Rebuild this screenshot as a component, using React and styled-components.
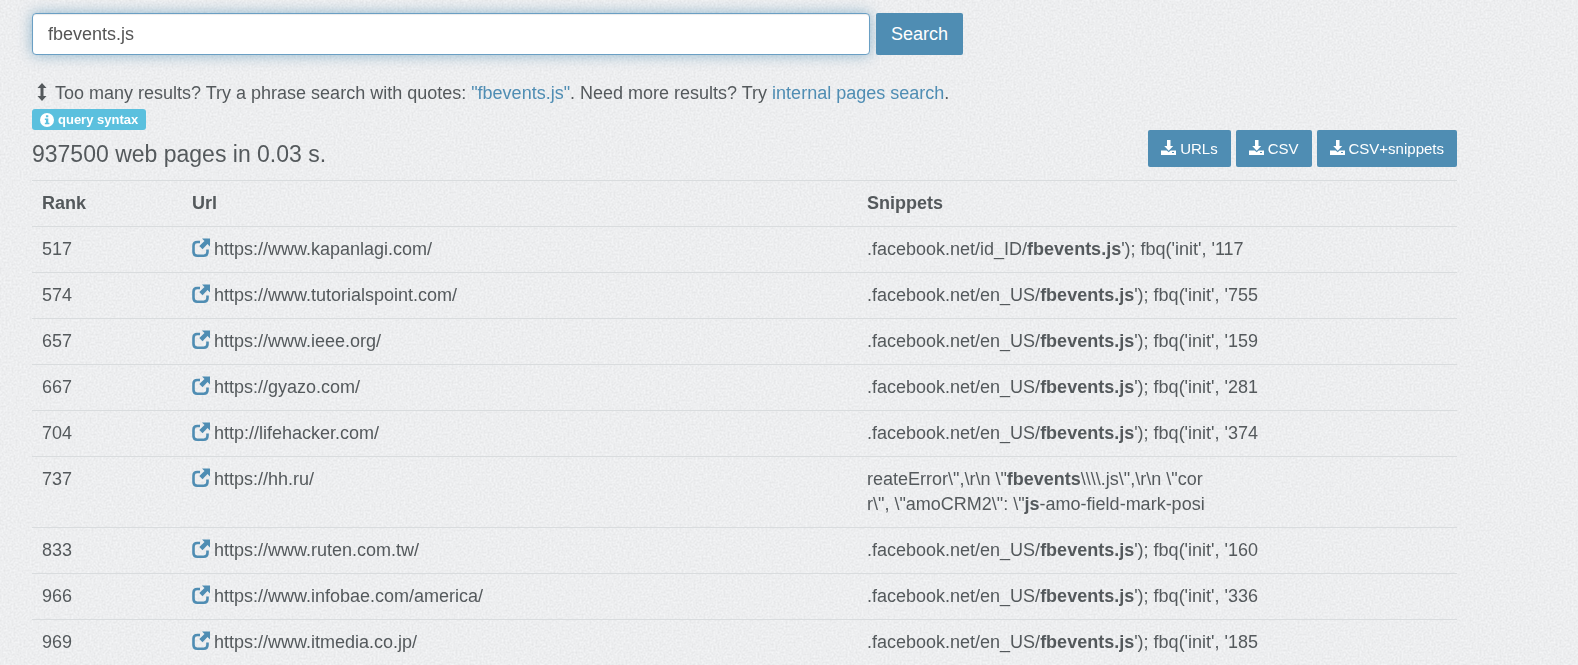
import React, { useState } from "react";
import styled, { createGlobalStyle } from "styled-components";

const GlobalStyle = createGlobalStyle`
  *, *::before, *::after { box-sizing: border-box; }
  html { background: #ecedef; }
  body {
    margin: 0;
    color: #54595c;
    font: 18px/25px "Liberation Sans", Arial, Helvetica, sans-serif;
  }
  a { color: #4f8db3; text-decoration: none; }
  a:hover { text-decoration: underline; }
`;

const Paper = styled.svg`
  position: fixed;
  inset: 0;
  z-index: -1;
  width: 100%;
  height: 100%;
`;

const Page = styled.main`
  padding: 13px 121px 0 32px;
`;

const SearchForm = styled.form`
  display: flex;
  gap: 6px;
  max-width: 931px;
`;

const SearchInput = styled.input`
  flex: 1;
  min-width: 0;
  height: 42px;
  padding: 0 15px;
  border: 1px solid #6a9fc4;
  border-radius: 4px;
  background: #fff;
  color: #555;
  font: inherit;
  outline: none;
  box-shadow: inset 0 1px 1px rgba(0, 0, 0, 0.08), 0 0 14px rgba(79, 141, 179, 0.6);
`;

const Button = styled.button`
  display: inline-flex;
  align-items: center;
  justify-content: center;
  gap: 4px;
  height: ${(p) => (p.$large ? 42 : 37)}px;
  padding: 0 ${(p) => (p.$large ? 15 : 13)}px;
  border: 0;
  border-radius: 2px;
  background: #4f8db3;
  color: #fff;
  font: inherit;
  font-size: ${(p) => (p.$large ? 18 : 15)}px;
  cursor: pointer;
`;

const Tip = styled.p`
  display: flex;
  align-items: center;
  gap: 8px;
  margin: 26px 0 0;
  padding-left: 5px;
`;

const SyntaxLink = styled.a`
  display: flex;
  align-items: center;
  gap: 4px;
  width: max-content;
  height: 21px;
  margin-top: 3px;
  padding: 0 8px;
  border-radius: 3px;
  background: #5bc0de;
  && { color: #fff; }
  font-size: 13px;
  font-weight: bold;
`;

const Summary = styled.div`
  display: flex;
  align-items: flex-start;
  justify-content: space-between;
  height: 50px;
`;

const Count = styled.h1`
  margin: 10px 0 0;
  font-size: 23px;
  font-weight: normal;
  line-height: 28px;
`;

const Downloads = styled.div`
  display: flex;
  gap: 5px;
`;

const Results = styled.table`
  width: 100%;
  table-layout: fixed;
  border-collapse: separate;
  border-spacing: 0;
`;

const Column = styled.col`
  width: ${(p) => p.$share};
`;

const Cell = styled.td`
  padding: 10px;
  border-top: 1px solid #d9dcde;
  text-align: left;
  vertical-align: top;
`;

const Site = styled.div`
  display: flex;
  gap: 4px;
`;

const OpenLink = styled.a`
  display: flex;
  height: 22px;
  align-items: center;
`;

const UpDownIcon = () => (
  <svg width="10" height="22" viewBox="0 0 10 22" fill="currentColor" aria-hidden="true">
    <path d="M5 0 9.500 5H6.500v8h3L5 18 .5 13h3V5h-3z" />
  </svg>
);

const InfoIcon = () => (
  <svg width="14" height="14" viewBox="0 0 13 13" aria-hidden="true">
    <circle cx="6.500" cy="6.500" r="6.500" fill="#fff" />
    <path d="M5.500 2.200h2.200v1.800H5.500zM4.500 5h3.200v4h1v1.400H4.500V9h1V6.400h-1z" fill="#5bc0de" />
  </svg>
);

const DownloadIcon = () => (
  <svg width="15" height="17" viewBox="0 0 15 17" fill="currentColor" aria-hidden="true">
    <path d="M6 0h3.500v6h2.700L7.700 10.800 3.200 6H6z" />
    <path d="M0 10.500h5.700l2 1.700 2-1.700H15V15H0zM11 12v1h2v-1z" fillRule="evenodd" />
  </svg>
);

const ExternalIcon = () => (
  <svg width="18" height="20" viewBox="0 0 18 20" aria-hidden="true">
    <path
      d="M8 4H5.200Q1.500 4 1.500 7.700v6.300q0 3.700 3.700 3.700h6.600q3.700 0 3.700-3.700v-2.500"
      fill="none"
      stroke="currentColor"
      strokeWidth="2.600"
    />
    <path d="M10 .5h8v8l-2.500-2.500-5 5.200-3.200-3.200 5.200-5z" fill="currentColor" />
  </svg>
);

const usSnippet = (id) => [[".facebook.net/en_US/", "fbevents.js", `'); fbq('init', '${id}`]];

const rows = [
  [517, "https://www.kapanlagi.com/", [[".facebook.net/id_ID/", "fbevents.js", "'); fbq('init', '117"]]],
  [574, "https://www.tutorialspoint.com/", usSnippet(755)],
  [657, "https://www.ieee.org/", usSnippet(159)],
  [667, "https://gyazo.com/", usSnippet(281)],
  [704, "http://lifehacker.com/", usSnippet(374)],
  [
    737,
    "https://hh.ru/",
    [
      ['reateError\\",\\r\\n \\"', "fbevents", '\\\\\\\\.js\\",\\r\\n \\"cor'],
      ['r\\", \\"amoCRM2\\": \\"', "js", "-amo-field-mark-posi"],
    ],
  ],
  [833, "https://www.ruten.com.tw/", usSnippet(160)],
  [966, "https://www.infobae.com/america/", usSnippet(336)],
  [969, "https://www.itmedia.co.jp/", usSnippet(185)],
];

export default function App() {
  const [query, setQuery] = useState("fbevents.js");
  return (
    <>
      <GlobalStyle />
      <Paper aria-hidden="true">
        <filter id="grain" x="0" y="0" width="100%" height="100%" colorInterpolationFilters="sRGB">
          <feTurbulence type="fractalNoise" baseFrequency="0.5" numOctaves="2" seed="4" />
          <feColorMatrix values="0.1 0 0 0 0.878  0.1 0 0 0 0.882  0.1 0 0 0 0.889  0 0 0 0 1" />
        </filter>
        <rect width="100%" height="100%" filter="url(#grain)" />
      </Paper>
      <Page>
        <SearchForm onSubmit={(e) => e.preventDefault()}>
          <SearchInput aria-label="Search query" value={query} onChange={(e) => setQuery(e.target.value)} />
          <Button $large type="submit">Search</Button>
        </SearchForm>
        <Tip>
          <UpDownIcon />
          <span>
            Too many results? Try a phrase search with quotes: <a href="#phrase">"fbevents.js"</a>. Need more
            results? Try <a href="#internal">internal pages search</a>.
          </span>
        </Tip>
        <SyntaxLink href="#syntax">
          <InfoIcon />
          query syntax
        </SyntaxLink>
        <Summary>
          <Count>937500 web pages in 0.03 s.</Count>
          <Downloads>
            {["URLs", "CSV", "CSV+snippets"].map((name) => (
              <Button key={name} type="button">
                <DownloadIcon />
                {name}
              </Button>
            ))}
          </Downloads>
        </Summary>
        <Results>
          <colgroup>
            <Column $share="calc(100% * 10 / 95)" />
            <Column $share="calc(100% * 45 / 95)" />
            <Column />
          </colgroup>
          <thead>
            <tr>
              <Cell as="th" scope="col">Rank</Cell>
              <Cell as="th" scope="col">Url</Cell>
              <Cell as="th" scope="col">Snippets</Cell>
            </tr>
          </thead>
          <tbody>
            {rows.map(([rank, url, lines]) => (
              <tr key={rank}>
                <Cell>{rank}</Cell>
                <Cell>
                  <Site>
                    <OpenLink href={url} aria-label={`Open ${url}`}>
                      <ExternalIcon />
                    </OpenLink>
                    {url}
                  </Site>
                </Cell>
                <Cell>
                  {lines.map(([before, match, after]) => (
                    <div key={before}>
                      {before}
                      <b>{match}</b>
                      {after}
                    </div>
                  ))}
                </Cell>
              </tr>
            ))}
          </tbody>
        </Results>
      </Page>
    </>
  );
}
